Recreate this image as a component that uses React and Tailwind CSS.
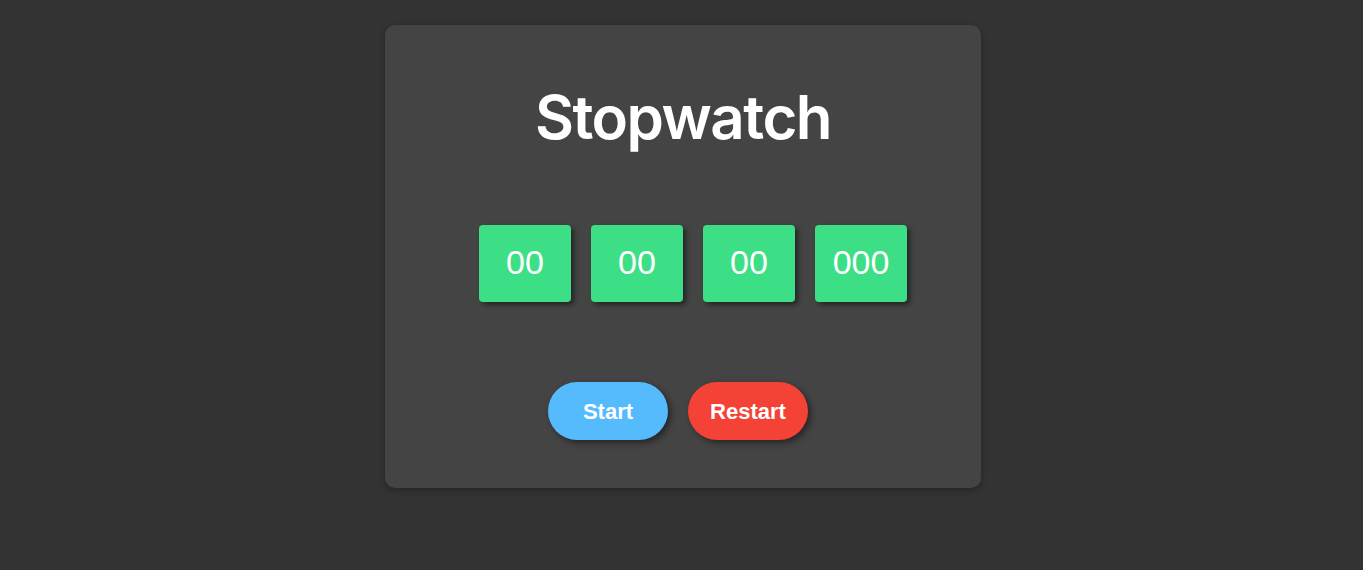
export default function App() {
  const boxes = ["00", "00", "00", "000"];
  return (
    <div className="min-h-[570px] w-full bg-[#333333] flex justify-center pt-[25px] pl-[3px]">
      <div className="w-[596px] h-[463px] bg-[#444444] rounded-[10px] shadow-[0_2px_6px_rgba(0,0,0,0.3)] flex flex-col items-center">
        <h1 className="mt-[57px] h-[70px] leading-[70px] text-white text-[60px] font-semibold tracking-[-1.5px] font-['Inter',sans-serif]">
          Stopwatch
        </h1>
        <div className="mt-[73px] flex gap-5 pl-[20px]">
          {boxes.map((b, i) => (
            <div
              key={i}
              className="w-[92px] h-[77px] bg-[#3ddf86] rounded-[4px] shadow-[3px_3px_5px_rgba(0,0,0,0.45)] flex items-center justify-center text-white text-[34px] font-['Liberation_Sans',Arial,sans-serif] pb-[3px]"
            >
              {b}
            </div>
          ))}
        </div>
        <div className="mt-[80px] flex gap-5 pr-[10px]">
          <button className="w-[120px] h-[58px] rounded-full bg-[#55bbfd] text-white text-[22px] font-bold shadow-[3px_3px_6px_rgba(0,0,0,0.45)] font-['Liberation_Sans',Arial,sans-serif]">
            Start
          </button>
          <button className="w-[120px] h-[58px] rounded-full bg-[#f44336] text-white text-[22px] font-bold shadow-[3px_3px_6px_rgba(0,0,0,0.45)] font-['Liberation_Sans',Arial,sans-serif]">
            Restart
          </button>
        </div>
      </div>
    </div>
  );
}
